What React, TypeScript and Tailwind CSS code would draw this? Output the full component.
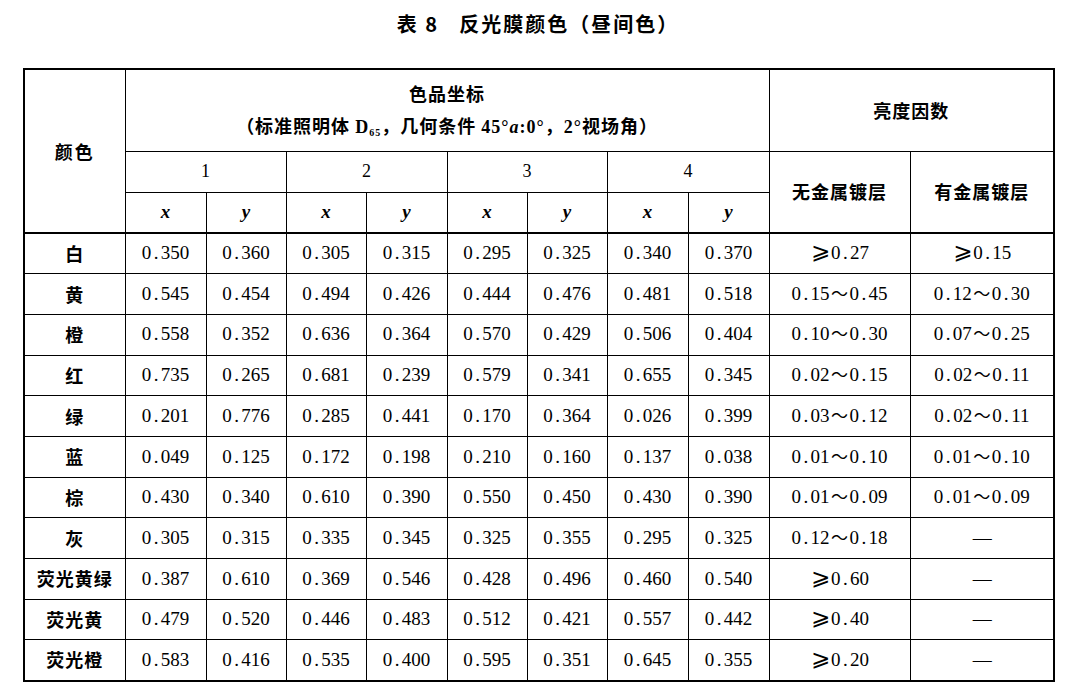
import React from 'react';

const cjk = "font-['Noto_Sans_CJK_SC',sans-serif]";
const serif = "font-['Liberation_Serif','Noto_Sans_CJK_SC',serif]";

type Row = { name: string; xy: string[]; a: string; b: string };

const rows: Row[] = [
  { name: '白', xy: ['0.350', '0.360', '0.305', '0.315', '0.295', '0.325', '0.340', '0.370'], a: '⩾0.27', b: '⩾0.15' },
  { name: '黄', xy: ['0.545', '0.454', '0.494', '0.426', '0.444', '0.476', '0.481', '0.518'], a: '0.15～0.45', b: '0.12～0.30' },
  { name: '橙', xy: ['0.558', '0.352', '0.636', '0.364', '0.570', '0.429', '0.506', '0.404'], a: '0.10～0.30', b: '0.07～0.25' },
  { name: '红', xy: ['0.735', '0.265', '0.681', '0.239', '0.579', '0.341', '0.655', '0.345'], a: '0.02～0.15', b: '0.02～0.11' },
  { name: '绿', xy: ['0.201', '0.776', '0.285', '0.441', '0.170', '0.364', '0.026', '0.399'], a: '0.03～0.12', b: '0.02～0.11' },
  { name: '蓝', xy: ['0.049', '0.125', '0.172', '0.198', '0.210', '0.160', '0.137', '0.038'], a: '0.01～0.10', b: '0.01～0.10' },
  { name: '棕', xy: ['0.430', '0.340', '0.610', '0.390', '0.550', '0.450', '0.430', '0.390'], a: '0.01～0.09', b: '0.01～0.09' },
  { name: '灰', xy: ['0.305', '0.315', '0.335', '0.345', '0.325', '0.355', '0.295', '0.325'], a: '0.12～0.18', b: '—' },
  { name: '荧光黄绿', xy: ['0.387', '0.610', '0.369', '0.546', '0.428', '0.496', '0.460', '0.540'], a: '⩾0.60', b: '—' },
  { name: '荧光黄', xy: ['0.479', '0.520', '0.446', '0.483', '0.512', '0.421', '0.557', '0.442'], a: '⩾0.40', b: '—' },
  { name: '荧光橙', xy: ['0.583', '0.416', '0.535', '0.400', '0.595', '0.351', '0.645', '0.355'], a: '⩾0.20', b: '—' },
];

const colWidths = ['w-[101px]', 'w-[81px]', 'w-[80px]', 'w-[80px]', 'w-[81px]', 'w-[80px]', 'w-[80px]', 'w-[81px]', 'w-[81px]', 'w-[141px]', 'w-[144px]'];

// digits in the scan sit in fixed cells, the point takes a whole cell
function Num({ v }: { v: string }) {
  const parts: React.ReactNode[] = [];
  v.split('').forEach((ch, i) => {
    if (ch === '.') {
      parts.push(
        <span key={i} className="inline-block w-[9.5px]">
          .
        </span>,
      );
    } else if (ch === '～') {
      parts.push(
        <span key={i} className={`${cjk} inline-block w-[20px] text-center text-[17px]`}>
          ～
        </span>,
      );
    } else if (ch === '⩾') {
      parts.push(
        <span key={i} className="inline-block w-[21px] text-center font-['DejaVu_Sans',sans-serif] text-[23px] leading-none">
          ⩾
        </span>,
      );
    } else if (ch === '—') {
      parts.push(
        <span key={i} className="inline-block w-[18px] text-center">
          —
        </span>,
      );
    } else {
      parts.push(ch);
    }
  });
  return <span className={`${serif} text-[19px]`}>{parts}</span>;
}

const cell = 'border border-black text-center align-middle p-0';

export default function App() {
  return (
    <div className="h-[691px] w-[1067px] bg-white pl-[23px] pt-[13px] text-black">
      <div className={`${cjk} h-[22px] w-[1030px] text-center text-[20px] font-bold leading-[22px] tracking-[2px]`}>
        <span>表 8</span>
        <span className="ml-[20px]">反光膜颜色（昼间色）</span>
      </div>
      <table className="mt-[33px] w-[1030px] table-fixed border-collapse border-2 border-black">
        <colgroup>
          {colWidths.map((w, i) => (
            <col key={i} className={w} />
          ))}
        </colgroup>
        <thead>
          <tr className="h-[82px]">
            <td rowSpan={3} className={`${cell} ${cjk} border-b-2 text-[18px] font-semibold tracking-[2px]`}>
              颜色
            </td>
            <td colSpan={8} className={`${cell} ${cjk} text-[18px] font-semibold`}>
              <div className="leading-[32px] tracking-[1px]">色品坐标</div>
              <div className="leading-[32px] tracking-[1px]">
                （标准照明体{' '}
                <span className={serif}>
                  D<sub className="text-[10px]">65</sub>
                </span>
                ，几何条件 <span className={serif}>45°<i>a</i>:0°</span>，<span className={serif}>2°</span>视场角）
              </div>
            </td>
            <td colSpan={2} className={`${cell} ${cjk} text-[18px] font-semibold tracking-[1px]`}>
              亮度因数
            </td>
          </tr>
          <tr className="h-[41px]">
            {['1', '2', '3', '4'].map((n) => (
              <td key={n} colSpan={2} className={`${cell} ${serif} text-[18px]`}>
                {n}
              </td>
            ))}
            <td rowSpan={2} className={`${cell} ${cjk} border-b-2 text-[18px] font-semibold tracking-[1px]`}>
              无金属镀层
            </td>
            <td rowSpan={2} className={`${cell} ${cjk} border-b-2 text-[18px] font-semibold tracking-[1px]`}>
              有金属镀层
            </td>
          </tr>
          <tr className="h-[41px]">
            {[0, 1, 2, 3].flatMap((k) => [
              <td key={`x${k}`} className={`${cell} ${serif} border-b-2 text-[19px] font-bold italic`}>
                x
              </td>,
              <td key={`y${k}`} className={`${cell} ${serif} border-b-2 text-[19px] font-bold italic`}>
                y
              </td>,
            ])}
          </tr>
        </thead>
        <tbody>
          {rows.map((r) => (
            <tr key={r.name} className="h-[40.7px]">
              <td className={`${cell} ${cjk} text-[18px] font-semibold tracking-[1px]`}>{r.name}</td>
              {r.xy.map((v, i) => (
                <td key={i} className={cell}>
                  <Num v={v} />
                </td>
              ))}
              <td className={cell}>
                <Num v={r.a} />
              </td>
              <td className={cell}>
                <Num v={r.b} />
              </td>
            </tr>
          ))}
        </tbody>
      </table>
    </div>
  );
}
